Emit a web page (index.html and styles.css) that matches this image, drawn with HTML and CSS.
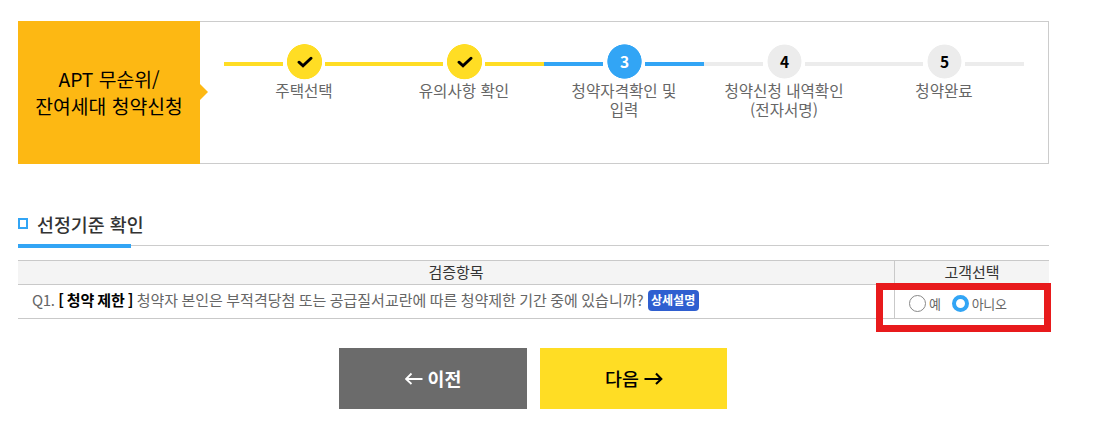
FILE: index.html
```html
<!DOCTYPE html>
<html lang="ko">
<head>
  <meta charset="UTF-8">
  <title>APT 무순위/잔여세대 청약신청</title>
  <link rel="stylesheet" href="styles.css">
</head>
<body>

  <div class="step-box">
    <h1 class="step-title">APT 무순위/<br>잔여세대 청약신청</h1>
    <ol class="steps">
      <li class="step done">
        <span class="circle"><svg width="16" height="12" viewBox="0 0 16 12"><path d="M2 6.2l4 3.6 8-7.6" fill="none" stroke="#000" stroke-width="2.9" stroke-linecap="round"/></svg></span>
        <span class="label">주택선택</span>
      </li>
      <li class="step done">
        <span class="circle"><svg width="16" height="12" viewBox="0 0 16 12"><path d="M2 6.2l4 3.6 8-7.6" fill="none" stroke="#000" stroke-width="2.9" stroke-linecap="round"/></svg></span>
        <span class="label">유의사항 확인</span>
      </li>
      <li class="step on">
        <span class="circle">3</span>
        <span class="label">청약자격확인 및<br>입력</span>
      </li>
      <li class="step">
        <span class="circle">4</span>
        <span class="label">청약신청 내역확인<br>(전자서명)</span>
      </li>
      <li class="step">
        <span class="circle">5</span>
        <span class="label">청약완료</span>
      </li>
    </ol>
  </div>

  <div class="heading">
    <h2>선정기준 확인</h2>
  </div>

  <div class="table-wrap">
    <table>
      <thead>
        <tr>
          <th>검증항목</th>
          <th class="choice">고객선택</th>
        </tr>
      </thead>
      <tbody>
        <tr>
          <td class="question"><div class="q-line"><span class="q-text"><span class="q-no">Q1.</span> <b>[ 청약 제한 ]</b> 청약자 본인은 부적격당첨 또는 공급질서교란에 따른 청약제한 기간 중에 있습니까?</span><a class="badge">상세설명</a></div></td>
          <td class="choice">
            <div class="radios">
              <label><input type="radio" name="q1">예</label>
              <label><input type="radio" name="q1" checked>아니오</label>
            </div>
          </td>
        </tr>
      </tbody>
    </table>
    <div class="mark"></div>
  </div>

  <div class="buttons">
    <button class="btn prev"><svg width="18" height="16" viewBox="0 0 18 16"><path d="M17.5 9H1.5M6.5 3.5L1 9l5.5 5" fill="none" stroke="currentColor" stroke-width="1.8"/></svg><span>이전</span></button>
    <button class="btn next"><span>다음</span><svg width="19" height="16" viewBox="0 0 19 16"><path d="M.5 9H17M12 3.5L17.3 9 12 14" fill="none" stroke="currentColor" stroke-width="2.1"/></svg></button>
  </div>

</body>
</html>
```

FILE: styles.css
```css
* {
  box-sizing: border-box;
}

body {
  margin: 0;
  padding: 21px 44px 0 18px;
  background: #fff;
  color: #666;
  font-family: "Noto Sans CJK KR", sans-serif;
  font-size: 15px;
}

/* 진행 단계 */
.step-box {
  display: flex;
  width: 1031px;
  height: 143px;
  border: 1px solid #ccc;
  border-left: 0;
}

.step-title {
  position: relative;
  display: flex;
  align-items: center;
  justify-content: center;
  width: 182px;
  margin: -1px 0;
  background: #fdb813;
  color: #000;
  font-size: 19.3px;
  font-weight: 400;
  line-height: 27px;
  text-align: center;
}

.step-title::after {
  content: "";
  position: absolute;
  top: 63px;
  left: 100%;
  border: 8.5px solid transparent;
  border-left: 8px solid #fdb813;
  border-right: 0;
}

.steps {
  display: flex;
  margin: 0;
  padding: 18px 0 0 24px;
  list-style: none;
}

.step {
  display: flex;
  flex-direction: column;
  align-items: center;
  width: 160px;
  height: 90px;
  background: linear-gradient(#ececec, #ececec) 0 22px / 100% 4px no-repeat;
}

.step.done {
  background-image: linear-gradient(#ffdd24, #ffdd24);
}

.step.on {
  background-image: linear-gradient(#32a5f5, #32a5f5);
}

.circle {
  display: flex;
  align-items: center;
  justify-content: center;
  width: 42px;
  height: 42px;
  padding-left: 1px;
  background: radial-gradient(circle at 21.5px 21.5px, #ececec 16.6px, #fff 17.3px);
  color: #000;
  font-size: 15.5px;
  font-weight: 700;
  line-height: 20px;
}

.done .circle {
  background: radial-gradient(circle at 21.5px 21.7px, #ffdd24 17.2px, #fff 17.9px);
}

.on .circle {
  background: radial-gradient(circle at 21.5px 21.5px, #32a5f5 16.8px, #fff 17.5px);
  color: #fff;
}

.done svg {
  margin-top: 2px;
}

.label {
  margin-top: -1px;
  font-size: 15.6px;
  line-height: 19px;
  text-align: center;
  white-space: nowrap;
}

/* 제목 */
.heading {
  width: 1031px;
  height: 36px;
  margin-top: 48px;
  background:
    linear-gradient(#32a5f5, #32a5f5) 0 32px / 113px 4px no-repeat,
    linear-gradient(#ccc, #ccc) 0 33px / 100% 1px no-repeat;
}

.heading h2 {
  display: flex;
  align-items: center;
  gap: 9px;
  margin: 0;
  color: #333;
  font-size: 18.4px;
  font-weight: 500;
  line-height: 24px;
}

.heading h2::before {
  content: "";
  width: 6px;
  height: 7px;
  margin-bottom: 2px;
  border: 2px solid #32a5f5;
}

/* 검증항목 표 */
.table-wrap {
  position: relative;
  width: 1031px;
  margin-top: 12px;
}

table {
  width: 100%;
  border-collapse: separate;
  border-spacing: 0;
  border-top: 1px solid #c9c9c9;
  table-layout: fixed;
}

th,
td {
  padding: 0;
  border-bottom: 1px solid #c9c9c9;
}

th {
  height: 24px;
  padding-bottom: 2px;
  background: #f4f4f4;
  color: #333;
  font-size: 15px;
  font-weight: 400;
  line-height: 21px;
}

td {
  height: 34px;
}

.choice {
  width: 155px;
  border-left: 1px solid #c9c9c9;
}

.question {
  padding-left: 14px;
}

.q-line {
  display: flex;
  align-items: center;
  gap: 4px;
  height: 33px;
  padding-bottom: 2px;
  white-space: nowrap;
}

.q-text {
  margin-bottom: 2px;
  font-size: 15px;
  line-height: 22px;
  word-spacing: -0.8px;
}

.q-no {
  letter-spacing: -0.3px;
}

.q-text b {
  color: #000;
  letter-spacing: -0.18px;
}

.badge {
  width: 51px;
  height: 21px;
  border-radius: 4px;
  background: #2f5fd0;
  color: #fff;
  font-size: 12px;
  font-weight: 700;
  line-height: 20px;
  text-align: center;
}

.radios {
  display: flex;
  gap: 11px;
  padding: 3px 0 0 14px;
  font-size: 13px;
  line-height: 15px;
  letter-spacing: -0.3px;
}

.radios label {
  display: flex;
  align-items: center;
  gap: 3px;
}

.radios input {
  appearance: none;
  width: 17px;
  height: 17px;
  margin: 0;
  border: 1px solid #888;
  border-radius: 50%;
}

.radios input:checked {
  border: 4px solid #32a5f5;
}

.mark {
  position: absolute;
  top: 23px;
  left: 858px;
  width: 175px;
  height: 49px;
  border: 7px solid #e81a1c;
}

/* 하단 버튼 */
.buttons {
  display: flex;
  gap: 13px;
  margin-top: 29px;
  padding-left: 321px;
}

.btn {
  display: flex;
  align-items: center;
  justify-content: center;
  gap: 5px;
  width: 188px;
  height: 61px;
  padding: 0 0 2px;
  border: 0;
  font-family: inherit;
  font-size: 18.4px;
  font-weight: 700;
  line-height: 26px;
}

.prev {
  background: #6b6b6b;
  color: #fff;
}

.next {
  width: 187px;
  padding-left: 1px;
  background: #ffdd24;
  color: #000;
  font-weight: 500;
}
```
